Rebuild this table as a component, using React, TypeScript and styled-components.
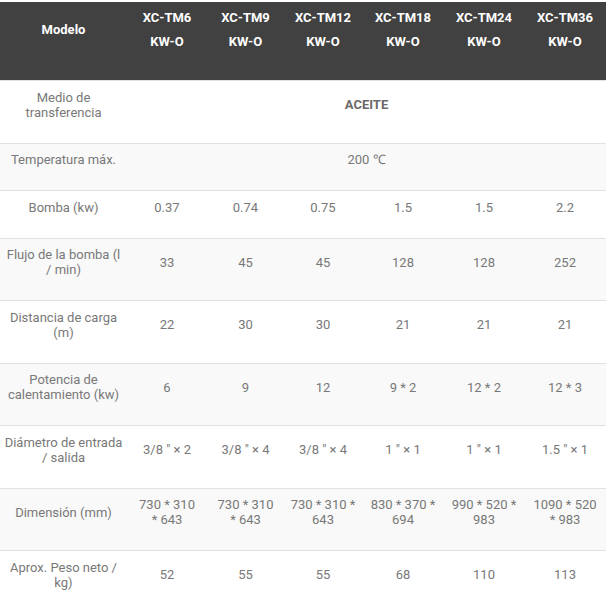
import React from "react";
import styled, { createGlobalStyle } from "styled-components";

const Global = createGlobalStyle`
  html, body { margin: 0; padding: 0; background: #ffffff; }
  body { font-family: Roboto, "Liberation Sans", Arial, sans-serif; }
`;

const Wrap = styled.div`
  padding-top: 2px;
  width: 606px;
  overflow: hidden;
`;

const Table = styled.table`
  width: 606px;
  border-collapse: collapse;
  table-layout: fixed;
  font-family: Roboto, "Liberation Sans", Arial, sans-serif;
  font-size: 13px;
`;

const HeadCell = styled.th`
  background: #414141;
  color: #ffffff;
  font-weight: 700;
  line-height: 24px;
  padding: 4px 2px 26px;
  text-align: center;
  vertical-align: middle;
`;

const Row = styled.tr<{ $striped: boolean }>`
  background: ${(p) => (p.$striped ? "#f9f9f9" : "#ffffff")};
  border-top: 1px solid #e2e2e2;
`;

const Cell = styled.td<{ $bold?: boolean }>`
  color: ${(p) => (p.$bold ? "#6a6a6a" : "#787878")};
  font-weight: ${(p) => (p.$bold ? 700 : 400)};
  line-height: 15px;
  padding: 8.5px 2px 23px;
  text-align: center;
  vertical-align: middle;
`;

const widths = [127, 80, 77, 78, 82, 80, 82];

const headers = ["XC-TM6", "XC-TM9", "XC-TM12", "XC-TM18", "XC-TM24", "XC-TM36"];

type RowData = {
  label: string[];
  values?: string[][];
  span?: string;
  bold?: boolean;
};

const rows: RowData[] = [
  { label: ["Medio de", "transferencia"], span: "ACEITE", bold: true },
  { label: ["Temperatura máx."], span: "200 ℃" },
  { label: ["Bomba (kw)"], values: [["0.37"], ["0.74"], ["0.75"], ["1.5"], ["1.5"], ["2.2"]] },
  { label: ["Flujo de la bomba (l", "/ min)"], values: [["33"], ["45"], ["45"], ["128"], ["128"], ["252"]] },
  { label: ["Distancia de carga", "(m)"], values: [["22"], ["30"], ["30"], ["21"], ["21"], ["21"]] },
  { label: ["Potencia de", "calentamiento (kw)"], values: [["6"], ["9"], ["12"], ["9 * 2"], ["12 * 2"], ["12 * 3"]] },
  {
    label: ["Diámetro de entrada", "/ salida"],
    values: [["3/8 \" × 2"], ["3/8 \" × 4"], ["3/8 \" × 4"], ["1 \" × 1"], ["1 \" × 1"], ["1.5 \" × 1"]],
  },
  {
    label: ["Dimensión (mm)"],
    values: [
      ["730 * 310", "* 643"],
      ["730 * 310", "* 643"],
      ["730 * 310 *", "643"],
      ["830 * 370 *", "694"],
      ["990 * 520 *", "983"],
      ["1090 * 520", "* 983"],
    ],
  },
  { label: ["Aprox. Peso neto /", "kg)"], values: [["52"], ["55"], ["55"], ["68"], ["110"], ["113"]] },
];

const Lines = ({ lines }: { lines: string[] }) => (
  <>
    {lines.map((l, i) => (
      <React.Fragment key={i}>
        {i > 0 && <br />}
        {l}
      </React.Fragment>
    ))}
  </>
);

export default function App() {
  return (
    <Wrap>
      <Global />
      <Table>
        <colgroup>
          {widths.map((w, i) => (
            <col key={i} style={{ width: w }} />
          ))}
        </colgroup>
        <thead>
          <tr>
            <HeadCell>Modelo</HeadCell>
            {headers.map((h) => (
              <HeadCell key={h}>
                {h}
                <br />
                KW-O
              </HeadCell>
            ))}
          </tr>
        </thead>
        <tbody>
          {rows.map((r, i) => (
            <Row key={i} $striped={i % 2 === 1}>
              <Cell>
                <Lines lines={r.label} />
              </Cell>
              {r.span ? (
                <Cell colSpan={6} $bold={r.bold}>
                  {r.span}
                </Cell>
              ) : (
                r.values!.map((v, j) => (
                  <Cell key={j}>
                    <Lines lines={v} />
                  </Cell>
                ))
              )}
            </Row>
          ))}
        </tbody>
      </Table>
    </Wrap>
  );
}
